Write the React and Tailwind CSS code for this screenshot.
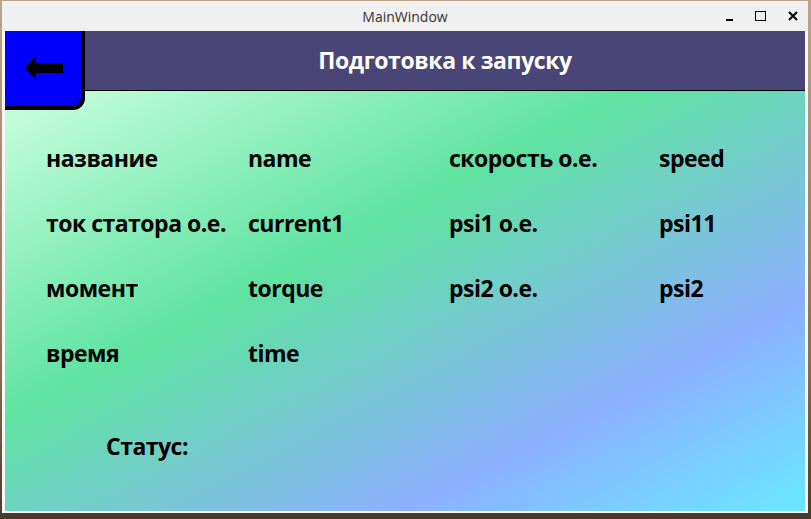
import React from "react";

const rows = [
  ["название", "name", "скорость о.е.", "speed"],
  ["ток статора о.е.", "current1", "psi1 о.е.", "psi11"],
  ["момент", "torque", "psi2 о.е.", "psi2"],
  ["время", "time", "", ""],
];

export default function App() {
  return (
    <div className="w-[811px] h-[519px] overflow-hidden bg-[linear-gradient(to_bottom,#bea38b,#8a6d52_70%,#4a3a2c)] pt-px pl-[2px]">
      <div className="w-[806px] h-[512px] bg-[#f0f0f0] flex flex-col">
        {/* title bar */}
        <div className="h-[30px] grid grid-cols-[1fr_auto_1fr] items-center font-['Open_Sans',sans-serif] text-[14px] text-[#333]">
          <div />
          <div className="pt-px">MainWindow</div>
          <div className="flex items-center justify-end gap-[22px] pr-[10px] text-black">
            <div className="w-[7px] h-[2px] bg-black mt-[8px]" />
            <div className="w-[11px] h-[10px] border-[1.5px] border-black" />
            <svg width="10" height="10" viewBox="0 0 10 10">
              <path d="M1 1L9 9M9 1L1 9" stroke="black" strokeWidth="2" />
            </svg>
          </div>
        </div>

        {/* central widget */}
        <div className="px-[3px] pb-[2px] bg-[#f7f7f7]">
          <div className="relative w-[800px] h-[480px] flex flex-col font-['Open_Sans',sans-serif] font-bold">
            <div className="h-[60px] bg-[#4a4577] border-b border-black flex shrink-0">
              <div className="w-[80px]" />
              <div className="flex-1 flex items-center justify-center text-white text-[23px] tracking-[-0.4px] pb-px">
                Подготовка к запуску
              </div>
            </div>

            <div className="flex-1 bg-[linear-gradient(to_bottom_right,#ccffe0_0%,#5fe3a1_39%,#8cb0ff_75%,#6ae8ff_100%)] pl-[41px] pt-[52px] text-black text-[23px] tracking-[-0.5px]">
              <div className="grid grid-cols-[202px_201px_210px_1fr] gap-y-[35px]">
                {rows.map((r, i) =>
                  r.map((t, j) => (
                    <div key={i + "-" + j} className="h-[30px] leading-[30px] whitespace-nowrap">
                      {t}
                    </div>
                  ))
                )}
              </div>
              <div className="mt-[63px] ml-[60px] h-[30px] leading-[30px]">Статус:</div>
            </div>

            {/* back button */}
            <div className="absolute top-0 left-0 w-[80px] h-[79px] bg-[#0000ff] border-r-4 border-b-4 border-black rounded-br-[12px]">
              <svg className="absolute left-[20px] top-[25px]" width="38" height="24" viewBox="0 0 38 24">
                <polygon points="0,12 11,0 11,7 38,7 38,17 11,17 11,24" fill="black" />
              </svg>
            </div>
          </div>
        </div>
      </div>
    </div>
  );
}
